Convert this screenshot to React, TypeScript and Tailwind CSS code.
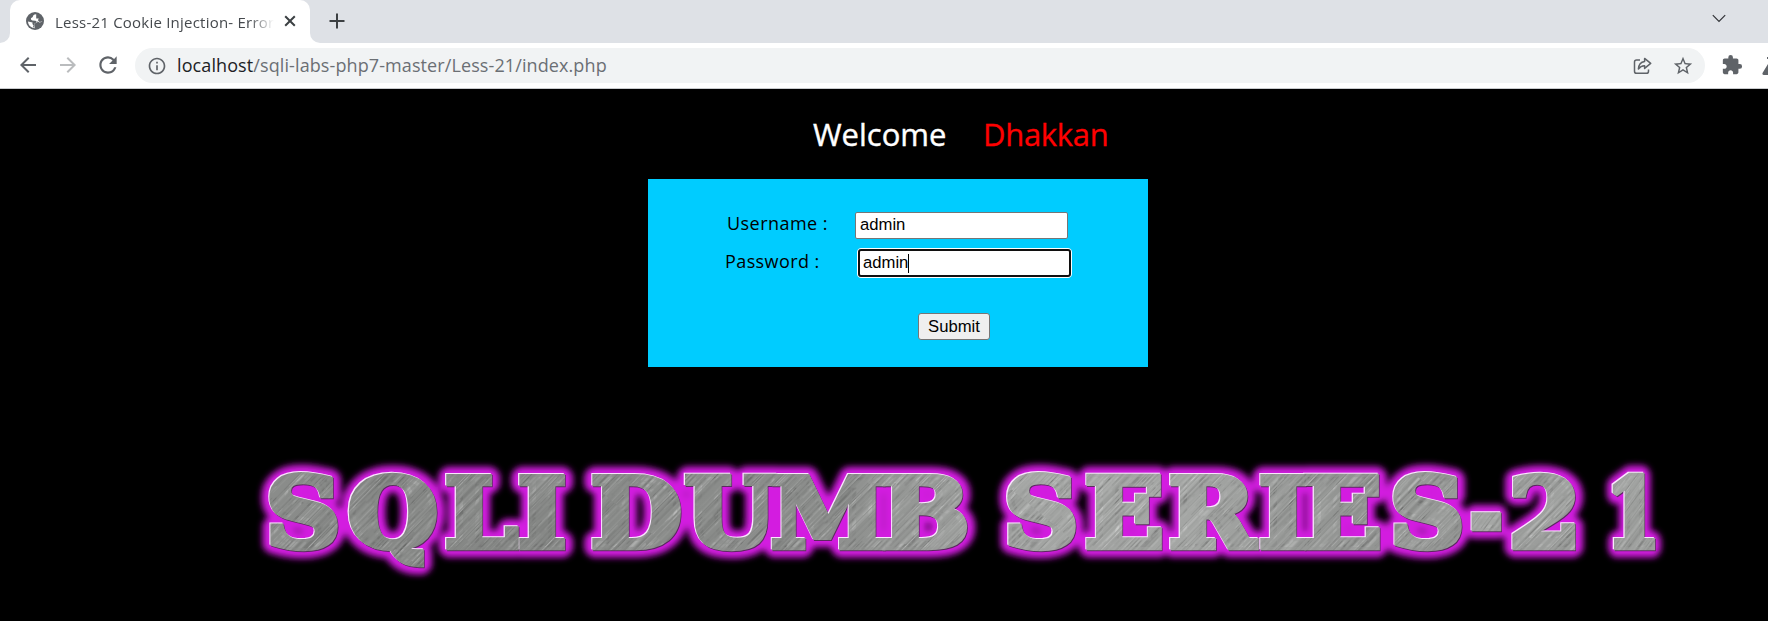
import React from "react";
import {
  MdArrowBack,
  MdArrowForward,
  MdRefresh,
  MdInfoOutline,
  MdStarBorder,
  MdExtension,
} from "react-icons/md";

function GlobeIcon() {
  return (
    <svg className="mb-px h-[22px] w-[22px] shrink-0" viewBox="0 0 22 22">
      <circle cx="11" cy="11" r="9" fill="#5f6368" />
      <path
        d="M12.2 4.2C9.5 4.4 8.9 5.6 8.8 7.1L6.9 8.3Q6.6 10.3 8.4 10.5L11.4 10.7Q12.8 11 12.7 12.4L10.6 13.2 10.4 16.2 9.2 17.9Q4.5 16.9 3.9 11.6L8.6 12.4 8.4 14 9.6 15.6Q8 18.5 11 18.2 17.8 17.6 18.2 11.6L15.6 11.9 13.9 10.2 14.8 8.6 12.2 8.4Z"
        fill="#fff"
      />
      <path d="M10.5 13.5 13.2 12.6 13.5 11.2 15.4 12.6 18.6 11.8Q18 18.4 10.6 19Z" fill="#5f6368" />
    </svg>
  );
}

function TabStrip() {
  return (
    <div className="flex h-[43px] w-full items-end bg-[#dee1e6]">
      <div className="h-full w-[10px] bg-white">
        <div className="h-full w-full rounded-br-[10px] bg-[#dee1e6]" />
      </div>
      <div className="flex h-full w-[300px] items-center rounded-t-[10px] bg-white pl-[14px]">
        <GlobeIcon />
        <div className="ml-[9px] w-[219px] overflow-hidden whitespace-nowrap pt-px font-['Open_Sans',sans-serif] text-[15px] leading-5 tracking-[0.22px] text-[#45494d] [mask-image:linear-gradient(to_right,black_194px,transparent_219px)]">
          Less-21 Cookie Injection- Error
        </div>
        <svg className="mb-px ml-[10px] h-3 w-3 shrink-0" viewBox="0 0 12 12">
          <path d="M1.2 1.2 10.8 10.8M10.8 1.2 1.2 10.8" stroke="#3c4043" strokeWidth="2" />
        </svg>
      </div>
      <div className="h-full w-[10px] bg-white">
        <div className="h-full w-full rounded-bl-[10px] bg-[#dee1e6]" />
      </div>
      <svg className="mb-[14px] ml-[9px] h-4 w-4" viewBox="0 0 16 16">
        <path d="M8 .5V15.5M.5 8H15.5" stroke="#3c4043" strokeWidth="2" />
      </svg>
      <svg className="mb-[20px] ml-auto mr-[42px] h-[9px] w-[14px]" viewBox="0 0 14 9">
        <path d="M.8 1.2 7 7.4 13.2 1.2" fill="none" stroke="#303236" strokeWidth="1.2" />
      </svg>
    </div>
  );
}

function Toolbar() {
  return (
    <div className="flex h-[46px] w-full items-center overflow-hidden border-b border-[#c9cbce] bg-white pl-4 text-[#5f6368]">
      <MdArrowBack className="mb-px h-6 w-6 shrink-0" />
      <MdArrowForward className="mb-px ml-4 h-6 w-6 shrink-0 text-[#babcbe]" />
      <MdRefresh className="mb-px ml-[15px] h-[26px] w-[26px] shrink-0" />
      <div className="ml-[14px] flex h-[35px] w-[1570px] shrink-0 items-center rounded-full bg-[#f1f3f4] pl-3">
        <MdInfoOutline className="h-5 w-5 shrink-0" />
        <div className="ml-[10px] whitespace-nowrap pb-[2px] font-['Open_Sans',sans-serif] text-[18px] leading-6 tracking-[0.1px] text-[#6b6f74]">
          <span className="text-[#202124]">localhost</span>/sqli-labs-php7-master/Less-21/index.php
        </div>
        <svg
          className="ml-auto h-[18px] w-[19px] shrink-0"
          viewBox="0 0 19 18"
          fill="none"
          stroke="#5f6368"
          strokeWidth="1.5"
          strokeLinejoin="round"
        >
          <path d="M7 3H3.6Q1.5 3 1.5 5.1V14.2Q1.5 16.3 3.6 16.3H13.4Q15.5 16.3 15.5 14.2V12.5" />
          <path d="M11.6 1.4 17.7 6.4 11.6 11.4V8.7Q8 8.5 5.4 12Q5.8 5.2 11.6 4.4Z" />
        </svg>
        <MdStarBorder className="ml-[20px] mr-[11px] h-[22px] w-[22px] shrink-0" />
      </div>
      <MdExtension className="mb-px ml-[16px] h-[22px] w-[22px] shrink-0" />
      <svg className="ml-[19px] h-[18px] w-[18px] shrink-0" viewBox="0 0 18 18">
        <path d="M5 0H13V2H12V7L17.5 16Q18 18 16 18H2Q0 18 .5 16L6 7V2H5Z" fill="#5f6368" />
      </svg>
    </div>
  );
}

function LoginForm() {
  return (
    <div className="ml-[648px] flex h-[188px] w-[500px] flex-col bg-[#00ccff] pt-[33px] font-['Open_Sans',sans-serif] text-[18px] text-black">
      <div className="flex h-[27px] items-center">
        <label className="ml-[79px] w-[128px] whitespace-nowrap pb-1 tracking-[0.45px]">Username :</label>
        <div className="h-[27px] w-[213px] rounded-[2px] border border-[#767676] bg-white pl-[4px] font-['Liberation_Sans',sans-serif] text-[16.67px] leading-[24px]">
          admin
        </div>
      </div>
      <div className="mt-[9px] flex h-[30px] items-center">
        <label className="ml-[77px] w-[132px] whitespace-nowrap pb-1 tracking-[0.4px]">Password :</label>
        <div className="h-[30px] w-[215px] rounded-[4px] border border-white bg-white">
          <div className="flex h-[28px] items-center rounded-[3px] border-2 border-[#101010] pl-[3px] font-['Liberation_Sans',sans-serif] text-[16.67px] leading-[24px]">
            <span className="pb-px">admin</span>
            <span className="h-[19px] w-px bg-black" />
          </div>
        </div>
      </div>
      <button className="ml-[270px] mt-[35px] h-[27px] w-[72px] rounded-[3px] border border-[#767676] bg-[#efefef] font-['Liberation_Sans',sans-serif] text-[16.67px] leading-[24px]">
        Submit
      </button>
    </div>
  );
}

const RUNS = [
  { text: "SQLI", stretch: 1.085, xs: [266, 348, 445, 518] },
  { text: "DUMB", stretch: 1.1, xs: [591, 685, 771, 881] },
  { text: "SERIES", stretch: 1.085, xs: [1004, 1085, 1169, 1259, 1303, 1390] },
  { text: "-", stretch: 0.83, xs: [1470] },
  { text: "2", stretch: 1.09, xs: [1509] },
  { text: "1", stretch: 0.82, xs: [1606] },
];

const STREAKS = Array.from({ length: 1100 }, (_, i) => {
  const r = (k: number) => {
    const v = Math.sin(i * 12.9898 + k * 78.233) * 43758.5453;
    return v - Math.floor(v);
  };
  return {
    x: r(1) * 340 - 40,
    y: Math.floor(r(2) * 160),
    w: 25 + r(3) * 60,
    light: r(4) > 0.5,
    o: 0.03 + r(5) * 0.08,
  };
});

function BannerText({ paint, width, ...rest }: { paint: string; width: number } & React.SVGProps<SVGGElement>) {
  return (
    <g
      fontFamily="'DejaVu Serif', serif"
      fontWeight="bold"
      fontSize="95"
      fill={paint}
      stroke={paint}
      strokeWidth={width}
      strokeLinejoin={width > 10 ? "round" : "miter"}
      strokeMiterlimit={2}
      {...rest}
    >
      {RUNS.map((run) => (
        <text
          key={run.text}
          x={run.xs.map((x) => (x / run.stretch).toFixed(1)).join(" ")}
          y={547}
          transform={`scale(${run.stretch} 1)`}
        >
          {run.text}
        </text>
      ))}
    </g>
  );
}

function Banner() {
  return (
    <svg className="mt-[53px] block h-[201px] w-full" viewBox="0 420 1768 201">
      <defs>
        <linearGradient id="steel" gradientUnits="userSpaceOnUse" x1="260" y1="0" x2="1660" y2="0">
          <stop offset="0" stopColor="#8a8c8a" />
          <stop offset=".1" stopColor="#858785" />
          <stop offset=".35" stopColor="#8c8e8c" />
          <stop offset=".48" stopColor="#a2a4a2" />
          <stop offset=".6" stopColor="#a4a6a4" />
          <stop offset=".7" stopColor="#929492" />
          <stop offset=".85" stopColor="#9c9e9c" />
          <stop offset="1" stopColor="#9ea09e" />
        </linearGradient>
        <pattern id="brushed" width="260" height="160" patternUnits="userSpaceOnUse" patternTransform="rotate(-48)">
          {STREAKS.map((s, i) => (
            <rect key={i} x={s.x} y={s.y} width={s.w} height="1" fill={s.light ? "#fff" : "#222"} opacity={s.o} />
          ))}
        </pattern>
        <filter id="glow" filterUnits="userSpaceOnUse" x="220" y="430" width="1480" height="180">
          <feGaussianBlur stdDeviation="3" />
        </filter>
      </defs>
      <g aria-hidden="true">
        <BannerText paint="#d31be0" width={21} filter="url(#glow)" />
        <BannerText paint="#5c2a60" width={6.5} transform="translate(.8 .8)" />
        <BannerText paint="#fbe6ff" width={6.5} transform="translate(-1.1 -1.1)" />
        <BannerText paint="url(#steel)" width={6.5} />
      </g>
      <BannerText paint="url(#brushed)" width={6.5} />
    </svg>
  );
}

export default function App() {
  return (
    <div className="h-[621px] w-[1768px] overflow-hidden bg-black">
      <TabStrip />
      <Toolbar />
      <div className="flex h-[90px] items-center whitespace-nowrap pl-[813px] pt-px font-['Open_Sans',sans-serif] text-[31px]">
        <span className="w-[170px] text-white [-webkit-text-stroke:0.4px_white]">Welcome</span>
        <span className="tracking-[-0.3px] text-[#ff0000] [-webkit-text-stroke:0.3px_#ff0000]">Dhakkan</span>
      </div>
      <LoginForm />
      <Banner />
    </div>
  );
}
